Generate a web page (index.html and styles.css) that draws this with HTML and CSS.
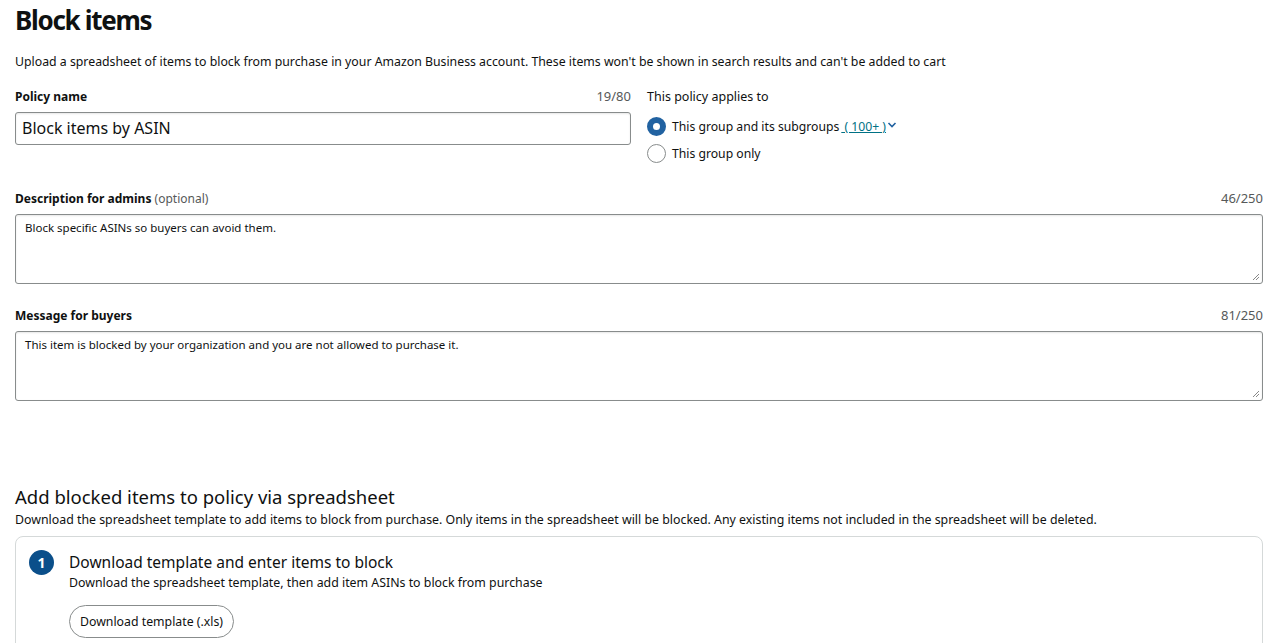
FILE: index.html
```html
<!DOCTYPE html>
<html>
<head>
<meta charset="utf-8">
<link rel="stylesheet" href="styles.css">
</head>
<body>
<div class="page">
  <h1 class="title">Block items</h1>
  <p class="intro">Upload a spreadsheet of items to block from purchase in your Amazon Business account. These items won't be shown in search results and can't be added to cart</p>

  <div class="row-top">
    <div class="col-name">
      <div class="label-row">
        <span class="label">Policy name</span>
        <span class="counter">19/80</span>
      </div>
      <div class="input">Block items by ASIN</div>
    </div>
    <div class="col-applies">
      <div class="applies-label">This policy applies to</div>
      <div class="radio-row">
        <span class="radio radio-on"></span>
        <span class="radio-text">This group and its subgroups</span>
        <a class="link">&nbsp;( 100+ )</a>
        <svg class="chev" width="10" height="8" viewBox="0 0 10 8"><path d="M1.5 2 L5 5.5 L8.5 2" fill="none" stroke="#2162a1" stroke-width="1.6"/></svg>
      </div>
      <div class="radio-row">
        <span class="radio"></span>
        <span class="radio-text">This group only</span>
      </div>
    </div>
  </div>

  <div class="field field-desc">
    <div class="label-row">
      <span class="label">Description for admins <span class="optional">(optional)</span></span>
      <span class="counter">46/250</span>
    </div>
    <div class="textarea">Block specific ASINs so buyers can avoid them.
      <svg class="grip" width="8" height="8" viewBox="0 0 8 8"><path d="M7 1 L1 7 M7 4 L4 7" stroke="#888" stroke-width="1"/></svg>
    </div>
  </div>

  <div class="field field-msg">
    <div class="label-row">
      <span class="label">Message for buyers</span>
      <span class="counter">81/250</span>
    </div>
    <div class="textarea">This item is blocked by your organization and you are not allowed to purchase it.
      <svg class="grip" width="8" height="8" viewBox="0 0 8 8"><path d="M7 1 L1 7 M7 4 L4 7" stroke="#888" stroke-width="1"/></svg>
    </div>
  </div>

  <h2 class="section-title">Add blocked items to policy via spreadsheet</h2>
  <p class="section-desc">Download the spreadsheet template to add items to block from purchase. Only items in the spreadsheet will be blocked. Any existing items not included in the spreadsheet will be deleted.</p>

  <div class="box">
    <div class="step">
      <div class="step-num">1</div>
      <div class="step-body">
        <div class="step-title">Download template and enter items to block</div>
        <div class="step-sub">Download the spreadsheet template, then add item ASINs to block from purchase</div>
        <button class="btn">Download template (.xls)</button>
      </div>
    </div>
  </div>
</div>
</body>
</html>
```
FILE: styles.css
```css
* { box-sizing: border-box; }
html, body { margin: 0; padding: 0; background: #fff; }
body {
  font-family: "Noto Sans", "Open Sans", Arial, sans-serif;
  color: #0f1111;
  overflow: hidden;
}
.page { padding: 0 20px 0 15px; width: 1283px; }
.title {
  margin: 0;
  padding-top: 3px;
  font-size: 26px;
  font-weight: 700;
  letter-spacing: -1.3px;
  line-height: 34px;
}
.intro {
  margin: 16px 0 0;
  font-size: 12.3px;
  line-height: 18px;
}
.row-top { display: flex; margin-top: 15px; }
.col-name { width: 616px; }
.col-applies { margin-left: 16px; padding-top: 1px; }
.label-row {
  display: flex;
  justify-content: space-between;
  align-items: baseline;
  height: 20px;
}
.label { font-size: 12px; font-weight: 700; line-height: 20px; }
.optional { font-weight: 400; color: #565959; }
.counter { font-size: 13px; color: #565959; line-height: 20px; }
.input {
  margin-top: 6px;
  height: 33px;
  border: 1px solid #888c8c;
  border-radius: 3px;
  padding: 0 6px;
  font-size: 16px;
  line-height: 31px;
  box-shadow: inset 0 1px 2px rgba(15,17,17,0.1);
}
.applies-label { font-size: 12.5px; line-height: 20px; }
.radio-row {
  display: flex;
  align-items: center;
  height: 27px;
  font-size: 12.2px;
}
.col-applies .radio-row:nth-child(2) { margin-top: 6px; }
.radio {
  width: 19px;
  height: 19px;
  border-radius: 50%;
  border: 1px solid #888c8c;
  margin-right: 6px;
  flex: none;
  background: #fff;
}
.radio-on { border: 6px solid #2162a1; }
.link { color: #007185; text-decoration: underline; margin-left: 2px; }
.chev { margin-left: 1px; margin-top: -4px; }
.field-desc { margin-top: 21px; }
.field-msg { margin-top: 21px; }
.textarea {
  position: relative;
  margin-top: 6px;
  height: 70px;
  border: 1px solid #888c8c;
  border-radius: 3px;
  padding: 5px 9px;
  font-size: 11.5px;
  line-height: 16px;
  box-shadow: inset 0 1px 2px rgba(15,17,17,0.1);
}
.grip { position: absolute; right: 2px; bottom: 2px; }
.section-title {
  margin: 82px 0 0;
  font-size: 18.5px;
  font-weight: 400;
  line-height: 28px;
}
.section-desc {
  margin: 0;
  font-size: 12.35px;
  line-height: 18px;
}
.box {
  margin-top: 7px;
  border: 1px solid #d5d9d9;
  border-radius: 8px;
  height: 200px;
  padding: 13px 13px;
}
.step { display: flex; }
.step-num {
  width: 25px;
  height: 25px;
  border-radius: 50%;
  background: #0b4f8a;
  color: #fff;
  font-size: 14px;
  font-weight: 700;
  text-align: center;
  line-height: 25px;
  flex: none;
  margin-right: 15px;
}
.step-title { font-size: 15.5px; line-height: 24px; margin-top: 0; }
.step-sub { font-size: 12.35px; line-height: 18px; }
.btn {
  margin-top: 13px;
  height: 33px;
  padding: 0 10px;
  border: 1px solid #888c8c;
  border-radius: 17px;
  background: #fff;
  font-family: inherit;
  font-size: 12.3px;
  color: #0f1111;
}
```
